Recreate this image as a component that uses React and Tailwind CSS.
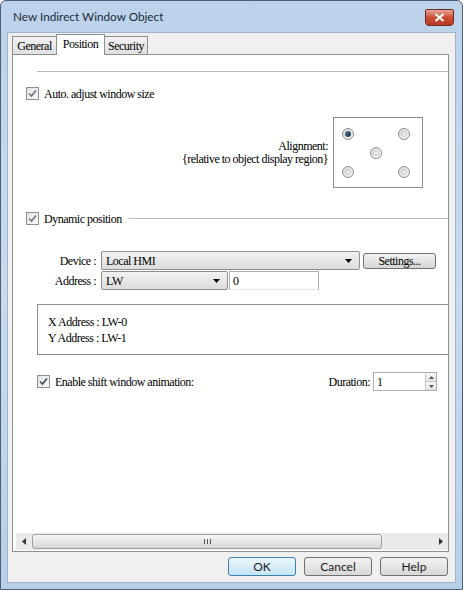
const Check = ({ dark }) => (
  <span className="flex h-[13px] w-[13px] shrink-0 items-center justify-center border border-[#8f8f8f] bg-gradient-to-br from-[#e4e4e4] to-[#f7f7f7]">
    <svg width="9" height="9" viewBox="0 0 9 9">
      <path
        d="M1 4.5 L3.5 7 L8 1.5"
        fill="none"
        stroke={dark ? '#3c4a5c' : '#6b7480'}
        strokeWidth="1.6"
      />
    </svg>
  </span>
);

const Radio = ({ on }) => (
  <span className="flex h-[12px] w-[12px] items-center justify-center rounded-full border border-[#8e8f8f] bg-gradient-to-br from-[#d8d8d8] to-[#fafafa]">
    {on ? (
      <span className="h-[6px] w-[6px] rounded-full bg-gradient-to-br from-[#5a7a9a] to-[#152c45]" />
    ) : (
      <span className="h-[6px] w-[6px] rounded-full border border-[#c8c8c8] bg-[#eeeeee]" />
    )}
  </span>
);

const Arrow = () => (
  <svg width="7" height="4" viewBox="0 0 7 4" className="shrink-0">
    <path d="M0 0 H7 L3.5 4 Z" fill="#000" />
  </svg>
);

const Combo = ({ value, width }) => (
  <div
    className={`flex h-[19px] ${width} items-center justify-between rounded-[2px] border border-[#8e8f8f] bg-gradient-to-b from-[#f2f2f2] to-[#dcdcdc] pl-[4px] pr-[7px]`}
  >
    <span>{value}</span>
    <Arrow />
  </div>
);

const Btn = ({ children, primary }) => (
  <div
    className={`flex h-[19px] w-[68px] items-center justify-center rounded-[3px] border font-['Lato','Noto_Sans',sans-serif] text-[12px] tracking-normal text-[#1a1a1a] ${
      primary
        ? 'border-[#3c7fb1] bg-gradient-to-b from-[#eaf6fd] to-[#c4e4f4]'
        : 'border-[#707070] bg-gradient-to-b from-[#f2f2f2] to-[#d8d8d8]'
    }`}
  >
    {children}
  </div>
);

export default function App() {
  return (
    <div className="flex h-[590px] w-[463px] flex-col overflow-hidden rounded-t-[6px] border border-[#4b5e74] bg-gradient-to-b from-[#bcd2ea] via-[#c8dbef] to-[#b7cfe9] font-['Liberation_Serif','DejaVu_Serif',serif] tracking-[-0.5px] text-[#000]">
      {/* title bar */}
      <div className="flex h-[31px] shrink-0 items-start justify-between pl-[12px] pr-[8px] pt-[8px]">
        <span className="font-['Lato','Noto_Sans',sans-serif] text-[11.75px] leading-[16px] tracking-normal text-[#1e2a3a]">
          New Indirect Window Object
        </span>
        <div className="flex h-[17px] w-[29px] items-center justify-center rounded-b-[4px] rounded-t-[2px] border border-[#6b2a22] bg-gradient-to-b from-[#e4a598] via-[#cc4b35] to-[#b83a24]">
          <svg width="11" height="9" viewBox="0 0 11 9">
            <path d="M1.5 1 L9.5 8 M9.5 1 L1.5 8" stroke="#fff" strokeWidth="2.2" />
          </svg>
        </div>
      </div>

      {/* client area */}
      <div className="mx-[6px] mb-[6px] flex flex-1 flex-col border border-[#9fb4cc] bg-[#f0f0f0] pl-[4px] pr-[6px]">
        {/* tabs */}
        <div className="flex h-[21px] items-end text-[12px]">
          <div className="flex h-[18px] w-[45px] items-center justify-center border border-b-0 border-[#8e8f8f] bg-gradient-to-b from-[#f2f2f2] to-[#e0e0e0]">
            General
          </div>
          <div className="relative z-10 -mb-px -ml-px flex h-[21px] w-[49px] items-center justify-center border border-b-0 border-[#8e8f8f] bg-white pb-[2px]">
            Position
          </div>
          <div className="-ml-px flex h-[18px] w-[44px] items-center justify-center border border-b-0 border-[#8e8f8f] bg-gradient-to-b from-[#f2f2f2] to-[#e0e0e0]">
            Security
          </div>
        </div>

        {/* panel */}
        <div className="flex h-[498px] flex-col border border-[#8e8f8f] bg-white text-[12px]">
          <div className="flex flex-1 flex-col overflow-hidden">
            <div className="ml-[24px] mt-[16px] h-px bg-[#b8bcc0]" />

            <div className="mt-[15px] flex h-[13px] items-center gap-[5px] pl-[13px]">
              <Check />
              <span>Auto. adjust window size</span>
            </div>

            <div className="mt-[17px] flex items-center">
              <div className="w-[315px] text-right leading-[13px]">
                <div>Alignment:</div>
                <div>{'{relative to object display region}'}</div>
              </div>
              <div className="ml-[5px] grid h-[71px] w-[90px] grid-cols-[12px_12px_12px] content-start gap-x-[16px] gap-y-[7px] border border-[#8e8f8f] pl-[8px] pt-[10px]">
                <Radio on />
                <span />
                <Radio />
                <span />
                <Radio />
                <span />
                <Radio />
                <span />
                <Radio />
              </div>
            </div>

            <div className="mt-[24px] flex h-[13px] items-center gap-[5px] pl-[13px]">
              <Check />
              <span>Dynamic position</span>
              <div className="ml-[2px] h-px flex-1 bg-[#b8bcc0]" />
            </div>

            <div className="mt-[26px] flex items-center">
              <span className="w-[83px] text-right">Device :</span>
              <div className="ml-[5px]">
                <Combo value="Local HMI" width="w-[259px]" />
              </div>
              <div className="ml-[3px] flex h-[16px] w-[73px] items-center justify-center rounded-[3px] border border-[#707070] bg-gradient-to-b from-[#f2f2f2] to-[#d6d6d6]">
                Settings...
              </div>
            </div>

            <div className="mt-[1px] flex items-center">
              <span className="w-[83px] text-right">Address :</span>
              <div className="ml-[5px]">
                <Combo value="LW" width="w-[127px]" />
              </div>
              <div className="ml-[1px] flex h-[19px] w-[90px] items-center border border-[#abadb3] border-b-[#e3e9ef] pl-[3px]">
                0
              </div>
            </div>

            <div className="ml-[24px] mt-[14px] h-[51px] border border-r-0 border-[#8e8f8f] pl-[10px] pt-[9px] leading-[16px]">
              <div>X Address : LW-0</div>
              <div>Y Address : LW-1</div>
            </div>

            <div className="mt-[17px] flex h-[19px] items-center pl-[24px]">
              <Check dark />
              <span className="ml-[5px] flex-1">Enable shift window animation:</span>
              <span className="mr-[3px]">Duration:</span>
              <div className="mr-[11px] flex h-[19px] w-[64px] items-center justify-between border border-[#abadb3] pl-[3px]">
                <span>1</span>
                <div className="flex h-full w-[11px] flex-col border-l border-[#c9c9c9]">
                  <div className="flex flex-1 items-center justify-center bg-gradient-to-b from-[#f5f5f5] to-[#e4e4e4]">
                    <svg width="5" height="3" viewBox="0 0 5 3">
                      <path d="M0 3 H5 L2.5 0 Z" fill="#555" />
                    </svg>
                  </div>
                  <div className="flex flex-1 items-center justify-center border-t border-[#c9c9c9] bg-gradient-to-b from-[#f5f5f5] to-[#e4e4e4]">
                    <svg width="5" height="3" viewBox="0 0 5 3">
                      <path d="M0 0 H5 L2.5 3 Z" fill="#555" />
                    </svg>
                  </div>
                </div>
              </div>
            </div>
          </div>

          {/* horizontal scrollbar */}
          <div className="mb-[1px] ml-[3px] flex h-[17px] items-center bg-[#eaeaea]">
            <div className="flex w-[16px] justify-center">
              <svg width="4" height="7" viewBox="0 0 4 7">
                <path d="M4 0 V7 L0 3.5 Z" fill="#333" />
              </svg>
            </div>
            <div className="flex h-[15px] w-[350px] items-center justify-center rounded-[3px] border border-[#a0a0a0] bg-gradient-to-b from-[#f4f4f4] via-[#e6e6e6] to-[#d6d6d6]">
              <svg width="7" height="5" viewBox="0 0 7 5">
                <path d="M0.5 0 V5 M3.5 0 V5 M6.5 0 V5" stroke="#555" strokeWidth="1" />
              </svg>
            </div>
            <div className="flex-1" />
            <div className="flex w-[14px] justify-center">
              <svg width="4" height="7" viewBox="0 0 4 7">
                <path d="M0 0 V7 L4 3.5 Z" fill="#333" />
              </svg>
            </div>
          </div>
        </div>

        {/* buttons */}
        <div className="mt-[5px] flex justify-end gap-[8px] pr-[1px]">
          <Btn primary>OK</Btn>
          <Btn>Cancel</Btn>
          <Btn>Help</Btn>
        </div>
      </div>
    </div>
  );
}
